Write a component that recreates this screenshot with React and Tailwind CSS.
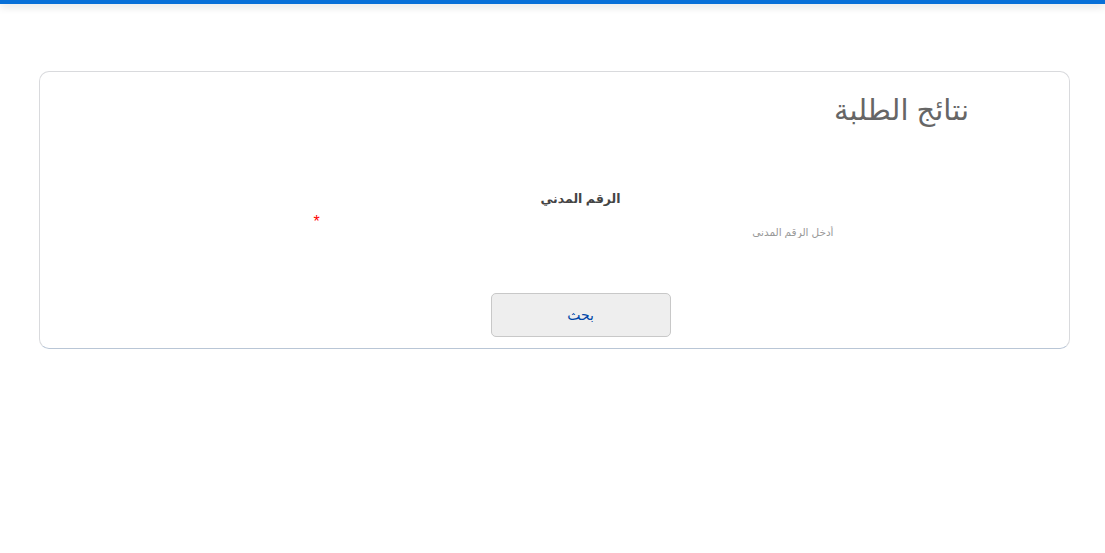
import { useState } from "react"

const App = () => {
  const [civilId, setCivilId] = useState("")

  return (
    <div className="min-h-screen bg-white font-['Liberation_Sans','DejaVu_Sans',sans-serif]">
      {/* top bar */}
      <div className="h-[4px] bg-[#0870d8] shadow-[0_2px_8px_rgba(0,0,0,0.18)]"></div>

      <div className="pl-[39px] pt-[67px]">
        <div className="h-[278px] w-[1031px] rounded-[10px] border border-[#d9dadd] border-b-[#b9c6d6] bg-white" dir="rtl">
          <h1 className="pr-[100px] pt-[18px] text-[29px] leading-[40px] text-[#666]">نتائج الطلبة</h1>

          <form className="flex flex-col items-center pl-[52px] pt-[60px]" onSubmit={(e) => e.preventDefault()}>
            <label className="text-[12.5px] font-bold leading-[18px] text-[#444]">الرقم المدني</label>
            <div className="mt-[4px] flex w-[534px] items-start">
              <input
                value={civilId}
                onChange={(e) => setCivilId(e.target.value)}
                placeholder="أدخل الرقم المدني"
                className="mt-[10px] h-[20px] flex-1 bg-transparent pl-[5px] pr-[14px] text-[10.5px] text-[#333] outline-none placeholder:text-[#999]"
              />
              <span className="text-[16px] leading-[20px] text-[#f00]">*</span>
            </div>
            <button
              type="submit"
              className="mt-[51px] h-[44px] w-[180px] rounded-[5px] border border-[#c8c8c8] bg-[#eeeeee] text-[14px] text-[#0047a8]"
            >
              بحث
            </button>
          </form>
        </div>
      </div>
    </div>
  )
}

export default App
